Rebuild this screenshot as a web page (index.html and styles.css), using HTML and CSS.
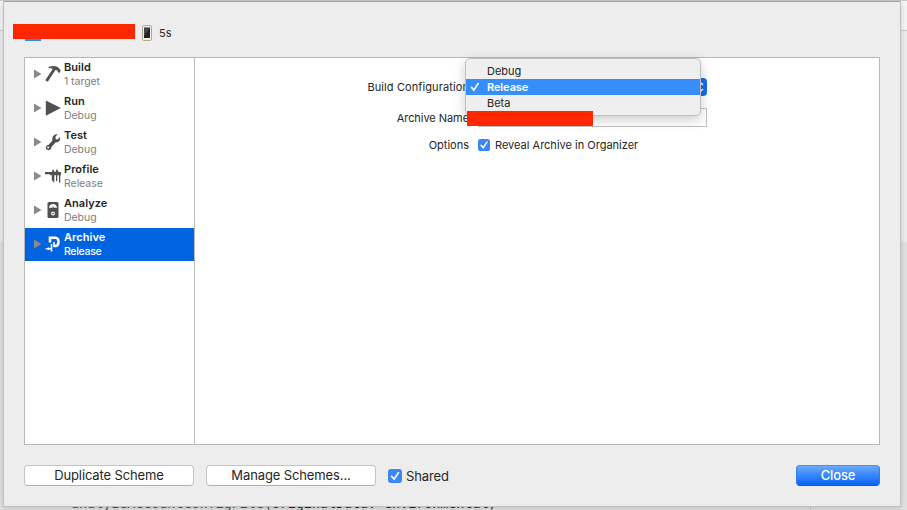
FILE: index.html
```html
<!DOCTYPE html>
<html lang="en">
<head>
<meta charset="utf-8">
<title>Scheme editor</title>
<link rel="stylesheet" href="styles.css">
</head>
<body>
<div class="editor">
  <div class="pane-left"></div>
  <pre class="code"><span>analyzeAccountConfigFile</span>(originalData: environmental)</pre>
</div>
<main class="sheet">
  <header class="crumbs">
    <div class="scheme"><i></i></div>
    <svg class="phone" width="10" height="16" viewBox="0 0 10 16"><rect x=".5" y=".5" width="9" height="15" rx="1.5" fill="#f5f1e9" stroke="#b5a68e"/><rect x="2" y="2.500" width="6" height="10.500" fill="#222"/><path d="M2 3h6L2 11z" fill="#444"/></svg>
    <span class="device">5s</span>
  </header>
  <section class="content">
    <nav class="actions">
      <div class="action"><svg class="arrow" viewBox="0 0 8 10"><path d="M0 0.500l7.500 4.500-7.500 4.500z"/></svg>
        <svg class="icon" viewBox="0 0 16 18"><path d="M3.500 1.800L8.500 1c3 .1 5.500 1.400 6.500 3.700l.8.4-1.200 3-2-1 .1-1.700-2.300-.5L2.800 16.800.3 15.200 7.900 3.700 3.700 3z"/></svg>
        <div class="label"><b>Build</b><span>1 target</span></div></div>
      <div class="action"><svg class="arrow" viewBox="0 0 8 10"><path d="M0 0.500l7.500 4.500-7.500 4.500z"/></svg>
        <svg class="icon" viewBox="0 0 16 18"><path d="M.8 1.500L15.800 9 .8 16.800z"/></svg>
        <div class="label"><b>Run</b><span>Debug</span></div></div>
      <div class="action"><svg class="arrow" viewBox="0 0 8 10"><path d="M0 0.500l7.500 4.500-7.500 4.500z"/></svg>
        <svg class="icon" viewBox="0 0 16 18"><path fill-rule="evenodd" d="M12.500 1.100L10.300 4.200l.5 2 1.800.3 2.400-2.600c.8 3-1.200 5.700-4.200 5.400L6.400 13.900c.2 2.100-1.700 3.500-3.500 3.200C.8 16.800.2 14.400 1.400 13c.7-.9 1.400-1 2.300-1.200L7.500 7.400C6.700 4 8.900 1.200 12.500 1.100zM3.200 13.600a1 1 0 1 0 0 2 1 1 0 0 0 0-2z"/></svg>
        <div class="label"><b>Test</b><span>Debug</span></div></div>
      <div class="action"><svg class="arrow" viewBox="0 0 8 10"><path d="M0 0.500l7.500 4.500-7.500 4.500z"/></svg>
        <svg class="icon" viewBox="0 0 16 18"><path d="M0 5h7V4l1.200-1.700L9.300 4v1h1.400V4l1.300-1.700L13.200 4v1H16v3.300h-.7V15l-1.300 1.200V8.300h-1.700V14H11V8.300H9.300V16L6.800 13V8.300H5.500L4.600 7.300H0z"/></svg>
        <div class="label"><b>Profile</b><span>Release</span></div></div>
      <div class="action"><svg class="arrow" viewBox="0 0 8 10"><path d="M0 0.500l7.500 4.500-7.500 4.500z"/></svg>
        <svg class="icon" viewBox="0 0 16 18"><rect x="2.500" y="1" width="11" height="16" rx="1.500"/><path fill="#fff" d="M4 6.800C4 4.500 5.800 3 8 3s4 1.500 4 3.800H9.100L7.400 4.700l.5 2.100z"/><circle cx="8" cy="12.500" r="2" fill="#fff"/><path d="M7 13l2-1" stroke="#505050"/></svg>
        <div class="label"><b>Analyze</b><span>Debug</span></div></div>
      <div class="action selected"><svg class="arrow" viewBox="0 0 8 10"><path d="M0 0.500l7.500 4.500-7.500 4.500z"/></svg>
        <svg class="icon" viewBox="0 0 16 18"><path fill="none" stroke="#fff" stroke-width="2.600" d="M5 7.500V2.800H10.300C12.800 2.800 13.500 4.500 13.500 6.500S12.800 11 10.300 11H8.500"/><path fill="none" stroke="#fff" stroke-width="1.600" d="M9 7v4.500M6.500 9v7.500M.7 13.800h6M3.500 12.500v2.500"/></svg>
        <div class="label"><b>Archive</b><span>Release</span></div></div>
    </nav>
    <div class="settings">
      <div class="row config"><label>Build Configuration</label>
        <div class="select"><svg width="17" height="18" viewBox="0 0 17 18"><path d="M7 7l3-3 3 3M7 11l3 3 3-3" fill="none" stroke="#fff" stroke-width="1.500"/></svg></div></div>
      <div class="row name"><label>Archive Name</label><div class="field"></div></div>
      <div class="row options"><label>Options</label>
        <svg class="check" viewBox="0 0 14 14"><rect width="14" height="14" rx="3"/><path d="M3.600 7.300l2.500 2.900 4.400-6.600"/></svg>
        <span class="reveal">Reveal Archive in Organizer</span></div>
    </div>
  </section>
  <footer class="footer">
    <button class="duplicate"><span>Duplicate Scheme</span></button>
    <button class="manage"><span>Manage Schemes...</span></button>
    <svg class="check" viewBox="0 0 14 14"><rect width="14" height="14" rx="3"/><path d="M3.600 7.300l2.500 2.900 4.400-6.600"/></svg>
    <span class="shared">Shared</span>
    <button class="close"><span>Close</span></button>
  </footer>
</main>
<div class="menu">
  <div class="item debug"><i></i><span>Debug</span></div>
  <div class="item active"><svg width="10" height="10" viewBox="0 0 10 10"><path d="M1.500 5.300l2.300 2.900 4.400-6.700" fill="none" stroke="#fff" stroke-width="1.600" stroke-linecap="round"/></svg><span>Release</span></div>
  <div class="item beta"><i></i><span>Beta</span></div>
</div>
<div class="redaction"></div>
</body>
</html>
```
FILE: styles.css
```css
* { box-sizing: border-box; }
body { margin: 0; width: 907px; height: 510px; overflow: hidden; position: relative; background: #e7e7e7; font: 11px/14px Inter, sans-serif; color: #262626; }
.editor { position: absolute; inset: 0; border-top: 1px solid #cdcdcd; background: linear-gradient(#f8f8f8 0 29px, #cfcfcf 29px 30px, #f0f0f0 30px 240px, #e4e4e4 241px); }
.pane-left { position: absolute; left: 810px; top: 505px; width: 1px; height: 5px; background: #c6c6c6; }
.code { position: absolute; left: 71px; top: 493px; margin: 0; font: 13.500px/18px "DejaVu Sans Mono", monospace; letter-spacing: -.1px; color: #222; }
.code span { color: #275b5c; }
.sheet { position: absolute; left: 3px; top: 1px; width: 898px; height: 506px; padding: 0 20px; border: 1px solid #c0c0c0; border-top-color: #a5a5a5; background: #ededed; box-shadow: 0 1px 7px rgba(0,0,0,.2); }
.crumbs { height: 55px; padding-top: 22px; margin-left: -11px; display: flex; align-items: flex-start; }
.scheme { width: 122px; height: 15px; background: #ff2600; display: flex; align-items: flex-end; }
.scheme i { width: 16px; height: 2px; margin: 0 0 -2px 12px; background: #1799e8; }
.phone { margin: 1px 7px 0 7px; }
.device { margin-top: 2px; }
.content { width: 856px; height: 388px; border: 1px solid #b7b7b7; background: #fff; display: flex; }
.actions { width: 170px; flex: none; border-right: 1px solid #bcbcbc; }
.action { height: 34px; display: flex; align-items: center; padding: 0 0 2px 9px; }
.arrow { width: 8px; height: 10px; fill: #8a8a8a; }
.icon { width: 16px; height: 18px; margin: 0 3px 0 3px; fill: #505050; }
.label { display: flex; flex-direction: column; line-height: 14px; }
.label b { font-weight: 600; margin-bottom: 1px; letter-spacing: .05px; }
.label span { font-size: 10.500px; color: #808080; letter-spacing: -.05px; }
.selected { height: 33px; padding-bottom: 1px; background: #0064e1; color: #fff; }
.selected .label span { color: #fff; font-weight: 500; letter-spacing: -.3px; }
.settings { flex: 1; padding-top: 20px; }
.row { display: flex; align-items: center; }
.row label { width: 274px; text-align: right; white-space: nowrap; }
.config { height: 18px; margin-bottom: 12px; }
.config label { letter-spacing: .1px; }
.row.name label { letter-spacing: -.06px; }
.select { width: 230px; height: 18px; margin-left: 8px; border-radius: 4px; display: flex; justify-content: flex-end; background: linear-gradient(90deg, #fff 213px, #166bf0 213px); }
.name { height: 19px; margin-bottom: 11px; }
.field { width: 229px; height: 19px; margin-left: 9px; border: 1px solid #c2c2c2; }
.options { height: 14px; }
.check { width: 12px; height: 12px; fill: #3c87f8; }
.check path { fill: none; stroke: #fff; stroke-width: 1.700; stroke-linecap: round; }
.options .check { margin: 0 5px 0 9px; }
.footer { display: flex; align-items: center; height: 21px; margin-top: 20px; width: 856px; font-size: 13px; }
button { height: 21px; padding: 0; border: 1px solid #c4c4c4; border-bottom-color: #b0b0b0; border-radius: 4px; background: #fff; color: #262626; font: 13px/18px Inter, sans-serif; letter-spacing: -.12px; width: 170px; }
button span { display: block; margin-top: -1px; }
.manage { margin: 0 12px; }
.footer .check { width: 14px; height: 14px; margin-right: 4px; margin-top: 1px; }
.shared { margin-top: 1px; letter-spacing: -.1px; }
.close { width: 84px; margin-left: auto; background: linear-gradient(#6aa8fb, #0564fa); border-color: #4b8ff7 #2f7bf2 #085cf0; color: #fff; font-weight: 500; }
.menu { position: absolute; left: 465px; top: 58px; width: 236px; height: 58px; padding: 4px 0; border: 1px solid #c0c0c0; border-radius: 5px; background: #efefef; box-shadow: 0 4px 12px rgba(0,0,0,.2); }
.item { height: 16px; display: flex; align-items: center; padding-left: 4px; line-height: 16px; }
.item i, .item svg { width: 10px; height: 10px; margin-right: 7px; }
.active { background: #388ef8; color: #fff; font-weight: 600; letter-spacing: -.1px; }
.redaction { position: absolute; left: 467px; top: 111px; width: 126px; height: 15px; background: #ff2600; }
```
